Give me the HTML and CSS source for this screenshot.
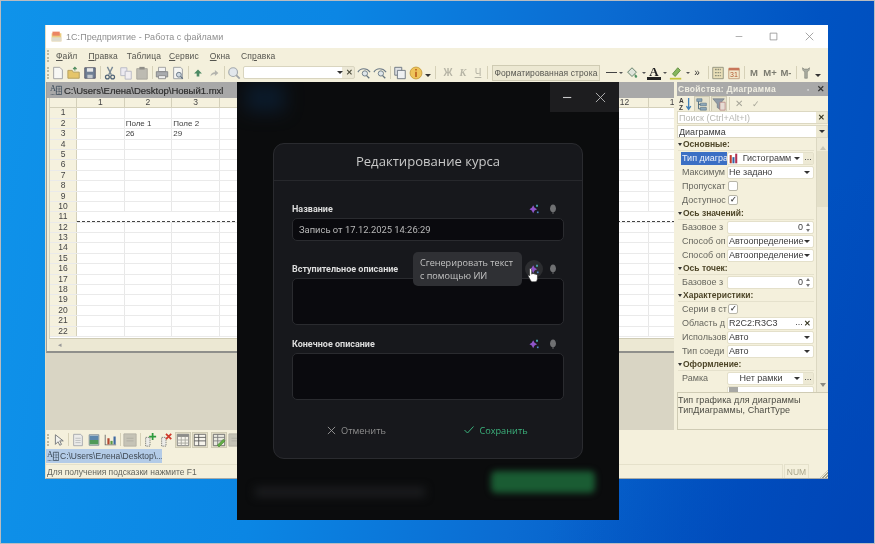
FILE: index.html
```html
<!DOCTYPE html>
<html lang="ru">
<head>
<meta charset="utf-8">
<title>1С:Предприятие</title>
<link rel="stylesheet" href="styles.css">
</head>
<body>
<svg class="defs" width="0" height="0" aria-hidden="true">
  <defs>
    <symbol id="i-new" viewBox="0 0 16 16"><path d="M3 1.500h7l3 3v10H3z" fill="#f7f7f4" stroke="#9a9c9e"/></symbol>
    <symbol id="i-open" viewBox="0 0 16 16"><path d="M1 5h5l1 2h7v7H1z" fill="#e5c56a" stroke="#b09a58"/><path d="M9 5V1.500M7 3.500l2-2 2 2" fill="none" stroke="#4d8a5c" stroke-width="1.3"/></symbol>
    <symbol id="i-save" viewBox="0 0 16 16"><path d="M2 2h12v12H2z" fill="#6f7f95" stroke="#556"/><path d="M4.500 2.500h7v4h-7z" fill="#e8e8e8"/><path d="M5 10h6v4H5z" fill="#c3c8ce"/></symbol>
    <symbol id="i-cut" viewBox="0 0 16 16"><path d="M5 1l4.500 9M11 1L6.500 10" stroke="#7a8a96" stroke-width="1.6" fill="none"/><circle cx="5" cy="12.500" r="2.200" fill="none" stroke="#4f6275" stroke-width="1.400"/><circle cx="11" cy="12.500" r="2.200" fill="none" stroke="#4f6275" stroke-width="1.400"/></symbol>
    <symbol id="i-copy" viewBox="0 0 16 16"><path d="M2 2h7v9H2z" fill="#eceaf0" stroke="#b3b6c2"/><path d="M7 6h7v9H7z" fill="#f1eef0" stroke="#b3b6c2"/></symbol>
    <symbol id="i-paste" viewBox="0 0 16 16"><path d="M2 3h12v12H2z" fill="#bdbbb2" stroke="#a5a39a"/><path d="M5 1h6v3H5z" fill="#8f8e88"/></symbol>
    <symbol id="i-print" viewBox="0 0 16 16"><path d="M4 1.500h8v5H4z" fill="#f2f2f2" stroke="#9a9a9a"/><path d="M1.500 6.500h13v6h-13z" fill="#a9abae" stroke="#808285"/><path d="M4 11h8v3.500H4z" fill="#ececec" stroke="#8a8a8a"/></symbol>
    <symbol id="i-preview" viewBox="0 0 16 16"><path d="M3 1.500h8l2 2v11H3z" fill="#f5f5f3" stroke="#94989c"/><circle cx="9" cy="10" r="2.800" fill="#cfd9e2" stroke="#61707f"/><path d="M11 12l2.500 2.500" stroke="#61707f" stroke-width="1.500"/></symbol>
    <symbol id="i-back" viewBox="0 0 16 16"><path d="M8 4L3.500 8.500H6.500V12h3V8.500h3z" fill="#4c8a63"/></symbol>
    <symbol id="i-fwd" viewBox="0 0 16 16"><path d="M4 12c0-3 2-5 5-5V4.500L13 8l-4 3.500V9c-2 0-4 1-5 3z" fill="#b3b3ad"/></symbol>
    <symbol id="i-find" viewBox="0 0 16 16"><circle cx="7" cy="7" r="5" fill="#e2e7ec" stroke="#a3a9ae" stroke-width="1.300"/><path d="M10.500 10.500l4 4" stroke="#9ea3a7" stroke-width="2"/></symbol>
    <symbol id="i-eye" viewBox="0 0 16 16"><path d="M1 7c3-5 10-5 14 0" fill="none" stroke="#6c7a86" stroke-width="1.200"/><circle cx="9" cy="8.500" r="3" fill="#dfe6ea" stroke="#66757f"/><path d="M11 11l3 3" stroke="#66757f" stroke-width="1.600"/></symbol>
    <symbol id="i-docs" viewBox="0 0 16 16"><path d="M2 1.500h8v9H2z" fill="#dfe2e6" stroke="#666f7a"/><path d="M5 5h9v9.500H5z" fill="#eef0f2" stroke="#666f7a"/></symbol>
    <symbol id="i-info" viewBox="0 0 16 16"><circle cx="8" cy="8" r="6.800" fill="#eec45a" stroke="#c79b3a"/><path d="M8 3.500v1.500M8 6.500v6" stroke="#b95a1b" stroke-width="1.800"/></symbol>
    <symbol id="i-fill" viewBox="0 0 16 16"><path d="M3 7l5-5 5 5-5 5z" fill="#dfe4da" stroke="#55745c"/><path d="M11 9c2 1 3 2 3 3a1.500 1.500 0 0 1-3 0z" fill="#4f9163"/></symbol>
    <symbol id="i-mark" viewBox="0 0 16 16"><path d="M4 9l6-7 3 3-6 7z" fill="#86b65e" stroke="#5d8a3a"/><path d="M1 13.500h13v2H1z" fill="#c5c43c"/></symbol>
    <symbol id="i-calc" viewBox="0 0 16 16"><path d="M2 1.500h12v13H2z" fill="#e9dfb8" stroke="#8d8f7a"/><path d="M4.500 4h7M4.500 7.500h7M4.500 11h7" stroke="#8d8f7a" stroke-width="1.500" stroke-dasharray="2 1"/></symbol>
    <symbol id="i-cal" viewBox="0 0 16 16"><path d="M2 3h12v11.500H2z" fill="#f1e7cb" stroke="#c09a78"/><path d="M2 2h12v3H2z" fill="#c8765a"/><text x="8" y="13" font-size="8" text-anchor="middle" fill="#b3562f" font-family="Liberation Sans">31</text></symbol>
    <symbol id="i-help" viewBox="0 0 16 16"><path d="M4 2c0 3 1 4 2.500 4.500V14h3V6.500C11 6 12 5 12 2l-2 1.500h-4z" fill="#a9aca0" stroke="#74766d" stroke-width=".6"/></symbol>
    <symbol id="i-az" viewBox="0 0 16 16"><text x="0" y="7" font-size="7.500" font-weight="700" fill="#3b3b3b" font-family="Liberation Sans">A</text><text x="0" y="15" font-size="7.500" font-weight="700" fill="#3b3b3b" font-family="Liberation Sans">Z</text><path d="M11 1v12M8.500 10.500L11 14l2.500-3.500" stroke="#3f7fb8" stroke-width="1.500" fill="none"/></symbol>
    <symbol id="i-tree" viewBox="0 0 16 16"><path d="M2 2h6v3H2zM6 7h7v3H6zM6 12h7v3H6z" fill="#8da7b8" stroke="#47657a" stroke-width=".6"/><path d="M4 5v8.500h2M4 8.500h2" stroke="#47657a" fill="none"/></symbol>
    <symbol id="i-filter" viewBox="0 0 16 16"><path d="M1 2h13L9 8v6l-3-2V8z" fill="#8f9aa6" stroke="#5f6a74" stroke-width=".6"/><path d="M9 6h6v9H9z" fill="#e6dcd4" stroke="#b07070" stroke-width=".7"/></symbol>
    <symbol id="i-arrow" viewBox="0 0 16 16"><path d="M5 2v11l3-3 2 4 2-1-2-4h4z" fill="#f2f2ee" stroke="#6c6f72"/></symbol>
    <symbol id="i-sheet" viewBox="0 0 16 16"><path d="M3 1.500h8l2 2v11H3z" fill="#ebebe9" stroke="#a2a5a9"/><path d="M5 6h6M5 8.500h6M5 11h6" stroke="#b9bbbd"/></symbol>
    <symbol id="i-pic" viewBox="0 0 16 16"><path d="M2.500 2h11v12h-11z" fill="#e4e8e6" stroke="#7b8a92"/><path d="M3 3h10v5H3z" fill="#5d87ad"/><path d="M3 8h10v5H3z" fill="#4f9a57"/></symbol>
    <symbol id="i-bars" viewBox="0 0 16 16"><path d="M2 14V2h1v11h12v1z" fill="#666"/><path d="M5 6h2.500v7H5z" fill="#b2462e"/><path d="M8.500 9H11v4H8.500z" fill="#5c9a45"/><path d="M12 4h2.500v9H12z" fill="#3f6aa1"/></symbol>
    <symbol id="i-gray" viewBox="0 0 16 16"><path d="M1 1h14v14H1z" fill="#c5c3b6" stroke="#b2b0a4"/><path d="M4 6h8M4 9h8" stroke="#aeaca1"/></symbol>
    <symbol id="i-rowadd" viewBox="0 0 16 16"><path d="M3 5h5v10H3z" fill="#ecece8" stroke="#72756f" stroke-dasharray="1.500 1"/><path d="M11 0v8M7 4h8" stroke="#2e9a3d" stroke-width="2"/></symbol>
    <symbol id="i-rowdel" viewBox="0 0 16 16"><path d="M3 5h5v10H3z" fill="#ecece8" stroke="#72756f" stroke-dasharray="1.500 1"/><path d="M8 1l6 6M14 1l-6 6" stroke="#cf3a2c" stroke-width="2"/></symbol>
    <symbol id="i-tbl" viewBox="0 0 16 16"><path d="M1.500 1.500h13v13h-13z" fill="#f6f4ec" stroke="#777"/><path d="M1.500 1.500h13v3h-13z" fill="#8d8d8a"/><path d="M6 4.500v10M10.500 4.500v10M1.500 8h13M1.500 11.500h13" stroke="#a5a59d"/></symbol>
    <symbol id="i-tbl2" viewBox="0 0 16 16"><path d="M1.500 1.500h13v13h-13z" fill="#f6f4ec" stroke="#666"/><path d="M1.500 5h13M1.500 9h13M6.500 1.500v13" stroke="#565656"/></symbol>
    <symbol id="i-edit" viewBox="0 0 16 16"><path d="M1.500 1.500h13v13h-13z" fill="#e9e9df" stroke="#666"/><path d="M1.500 5h13M6.500 1.500v13M1.500 9h13" stroke="#7d7d7d"/><path d="M6 14l7-7 2 2-7 7z" fill="#62ad45" stroke="#3d7d2a" stroke-width=".6"/></symbol>
    <symbol id="i-mxl" viewBox="0 0 16 16"><text x="0" y="9" font-size="11" fill="#3a4a58" font-family="Liberation Serif">A</text><path d="M8.500 3h7v11h-7z" fill="none" stroke="#3a4a58"/><path d="M8.500 6.500h7M8.500 10h7M12 3v11M1 14h6" stroke="#3a4a58" stroke-dasharray="1 .8"/></symbol>
    <symbol id="i-chart" viewBox="0 0 16 16"><path d="M1 3h3v12H1z" fill="#c0392b"/><path d="M5 6h3v9H5z" fill="#3465a4"/><path d="M9 1h3v14H9z" fill="#b03050"/></symbol>
    <symbol id="i-spark" viewBox="0 0 12 12"><path d="M5 1.500l1.700 3 3 1.700-3 1.700L5 11 3.300 7.900.5 6.200l2.800-1.700z" fill="#8f55c9"/><path d="M8.500 1h2.200v2.200H8.500z" fill="#46a6ac"/><path d="M9.500 9h2v2h-2z" fill="#4c86c4"/></symbol>
    <symbol id="i-mic" viewBox="0 0 12 12"><path d="M6 .5c2 0 3.300 1.700 3.500 4.500.2 3-1.300 5-3.500 5S2.300 8 2.500 5C2.700 2.200 4 .5 6 .5z" fill="#6f7072"/><path d="M6 9.500v2.500" stroke="#6f7072"/></symbol>
  </defs>
</svg>

<div class="desktop">
  <section class="win">
    <header class="win-title">
      <svg class="app-icon" viewBox="0 0 16 16"><path d="M2 4h12v10H2z" fill="#e8c46a"/><path d="M3 2h9v5H3z" fill="#e8704a"/><path d="M2 9h12v5H2z" fill="#d9d5c4"/></svg>
      <span class="win-name">1С:Предприятие - Работа с файлами</span>
      <span class="caps">
        <svg class="cap" viewBox="0 0 12 12"><path d="M1 6h10" stroke="#8a8a8a"/></svg>
        <svg class="cap" viewBox="0 0 12 12"><path d="M1.500 1.500h9v9h-9z" fill="none" stroke="#8a8a8a"/></svg>
        <svg class="cap" viewBox="0 0 12 12"><path d="M1 1l10 10M11 1L1 11" stroke="#8a8a8a"/></svg>
      </span>
    </header>
    <nav class="menu">
      <i class="grip"></i>
      <span class="mi"><u>Ф</u>айл</span>
      <span class="mi"><u>П</u>равка</span>
      <span class="mi">Таблица</span>
      <span class="mi"><u>С</u>ервис</span>
      <span class="mi"><u>О</u>кна</span>
      <span class="mi">Сп<u>р</u>авка</span>
    </nav>
    <div class="toolbar">
      <i class="grip"></i>
      <svg class="ti"><use href="#i-new"/></svg>
      <svg class="ti"><use href="#i-open"/></svg>
      <svg class="ti"><use href="#i-save"/></svg>
      <i class="sep"></i>
      <svg class="ti"><use href="#i-cut"/></svg>
      <svg class="ti"><use href="#i-copy"/></svg>
      <svg class="ti"><use href="#i-paste"/></svg>
      <i class="sep"></i>
      <svg class="ti"><use href="#i-print"/></svg>
      <svg class="ti"><use href="#i-preview"/></svg>
      <i class="sep"></i>
      <svg class="ti"><use href="#i-back"/></svg>
      <svg class="ti"><use href="#i-fwd"/></svg>
      <i class="sep"></i>
      <svg class="ti"><use href="#i-find"/></svg>
      <span class="searchbox"><i class="drop"></i><b class="xmark">✕</b></span>
      <svg class="ti"><use href="#i-eye"/></svg>
      <svg class="ti"><use href="#i-eye"/></svg>
      <i class="sep"></i>
      <svg class="ti"><use href="#i-docs"/></svg>
      <svg class="ti"><use href="#i-info"/></svg>
      <i class="drop drop-after"></i>
      <i class="sep sep-wide"></i>
      <span class="fmt bold-dim">Ж</span>
      <span class="fmt ital-dim">К</span>
      <span class="fmt under-dim">Ч</span>
      <i class="sep"></i>
      <span class="fmtbox">Форматированная строка</span>
      <span class="dash"></span><i class="drop drop-tiny"></i>
      <svg class="ti"><use href="#i-fill"/></svg><i class="drop drop-tiny"></i>
      <span class="letter-a">A</span><i class="drop drop-tiny"></i>
      <svg class="ti"><use href="#i-mark"/></svg><i class="drop drop-tiny"></i>
      <span class="more">»</span>
      <i class="sep"></i>
      <svg class="ti"><use href="#i-calc"/></svg>
      <svg class="ti"><use href="#i-cal"/></svg>
      <i class="sep"></i>
      <span class="mem">М</span><span class="mem">М+</span><span class="mem">М-</span>
      <i class="sep"></i>
      <svg class="ti"><use href="#i-help"/></svg>
      <i class="drop drop-after"></i>
    </div>

    <div class="main">
      <div class="mdi">
        <div class="doc">
          <div class="doc-title">
            <svg class="doc-icon"><use href="#i-mxl"/></svg>
            <span>C:\Users\Елена\Desktop\Новый1.mxl</span>
          </div>
          <div class="sheet">
            <div class="row row-head"><span class="rh"></span><span class="ch">1</span><span class="ch">2</span><span class="ch">3</span><span class="ch">4</span><span class="ch">5</span><span class="ch">6</span><span class="ch">7</span><span class="ch">8</span><span class="ch">9</span><span class="ch">10</span><span class="ch">11</span><span class="ch">12</span><span class="ch">1</span></div>
            <div class="row"><span class="rh">1</span></div>
            <div class="row"><span class="rh">2</span><span class="c"></span><span class="c">Поле 1</span><span class="c">Поле 2</span></div>
            <div class="row"><span class="rh">3</span><span class="c"></span><span class="c">26</span><span class="c">29</span></div>
            <div class="row"><span class="rh">4</span></div>
            <div class="row"><span class="rh">5</span></div>
            <div class="row"><span class="rh">6</span></div>
            <div class="row"><span class="rh">7</span></div>
            <div class="row"><span class="rh">8</span></div>
            <div class="row"><span class="rh">9</span></div>
            <div class="row"><span class="rh">10</span></div>
            <div class="row row-break"><span class="rh">11</span></div>
            <div class="row"><span class="rh">12</span></div>
            <div class="row"><span class="rh">13</span></div>
            <div class="row"><span class="rh">14</span></div>
            <div class="row"><span class="rh">15</span></div>
            <div class="row"><span class="rh">16</span></div>
            <div class="row"><span class="rh">17</span></div>
            <div class="row"><span class="rh">18</span></div>
            <div class="row"><span class="rh">19</span></div>
            <div class="row"><span class="rh">20</span></div>
            <div class="row"><span class="rh">21</span></div>
            <div class="row"><span class="rh">22</span></div>
          </div>
          <div class="hscroll"><span class="hscroll-btn">◂</span></div>
        </div>
      </div>

      <aside class="props">
        <div class="props-title"><span>Свойства: Диаграмма</span><span class="pin">▫</span><b class="close">✕</b></div>
        <div class="props-tools">
          <svg class="ti ti-first"><use href="#i-az"/></svg>
          <span class="pressed"><svg class="ti"><use href="#i-tree"/></svg></span>
          <span class="pressed"><svg class="ti"><use href="#i-filter"/></svg></span>
          <i class="sep"></i>
          <span class="tool-x">✕</span>
          <span class="tool-ok">✓</span>
        </div>
        <div class="combo"><span class="combo-text combo-ph">Поиск (Ctrl+Alt+I)</span><b class="combo-x combo-btn">✕</b></div>
        <div class="combo"><span class="combo-text">Диаграмма</span><span class="combo-btn"><i class="drop"></i></span></div>
        <div class="plist">
          <div class="rows">
            <div class="grp">Основные:</div>
            <div class="p"><span class="pl pl-sel">Тип диагра</span><span class="pv"><svg class="chart"><use href="#i-chart"/></svg><span class="pv-c">Гистограмм</span><i class="drop"></i><span class="dots">...</span></span></div>
            <div class="p"><span class="pl">Максимум</span><span class="pv"><span class="pv-t">Не задано</span><i class="drop"></i></span></div>
            <div class="p"><span class="pl">Пропускат</span><span class="pv pv-bare"><i class="cb"></i></span></div>
            <div class="p"><span class="pl">Доступнос</span><span class="pv pv-bare"><i class="cb cb-on">✓</i></span></div>
            <div class="grp">Ось значений:</div>
            <div class="p"><span class="pl">Базовое з</span><span class="pv"><span class="pv-n">0</span><i class="spin"></i></span></div>
            <div class="p"><span class="pl">Способ оп</span><span class="pv"><span class="pv-t">Автоопределение</span><i class="drop"></i></span></div>
            <div class="p"><span class="pl">Способ оп</span><span class="pv"><span class="pv-t">Автоопределение</span><i class="drop"></i></span></div>
            <div class="grp">Ось точек:</div>
            <div class="p"><span class="pl">Базовое з</span><span class="pv"><span class="pv-n">0</span><i class="spin"></i></span></div>
            <div class="grp">Характеристики:</div>
            <div class="p"><span class="pl">Серии в ст</span><span class="pv pv-bare"><i class="cb cb-on">✓</i></span></div>
            <div class="p"><span class="pl">Область д</span><span class="pv"><span class="pv-t">R2C2:R3C3</span><span class="dots">...</span><b class="combo-x">✕</b></span></div>
            <div class="p"><span class="pl">Использов</span><span class="pv"><span class="pv-t">Авто</span><i class="drop"></i></span></div>
            <div class="p"><span class="pl">Тип соеди</span><span class="pv"><span class="pv-t">Авто</span><i class="drop"></i></span></div>
            <div class="grp">Оформление:</div>
            <div class="p"><span class="pl">Рамка</span><span class="pv"><span class="pv-c">Нет рамки</span><i class="drop"></i><span class="dots">...</span></span></div>
            <div class="p"><span class="pl pl-low"></span><span class="pv"><i class="swatch"></i></span></div>
          </div>
          <div class="vscroll"><i class="up"></i><i class="thumb"></i><i class="down"></i></div>
        </div>
        <div class="hint">Тип графика для диаграммы<br>ТипДиаграммы, ChartType</div>
      </aside>
    </div>

    <div class="bottombar">
      <i class="grip"></i>
      <svg class="ti"><use href="#i-arrow"/></svg>
      <i class="sep"></i>
      <svg class="ti"><use href="#i-sheet"/></svg>
      <svg class="ti"><use href="#i-pic"/></svg>
      <svg class="ti"><use href="#i-bars"/></svg>
      <i class="sep"></i>
      <svg class="ti"><use href="#i-gray"/></svg>
      <i class="sep"></i>
      <svg class="ti"><use href="#i-rowadd"/></svg>
      <svg class="ti"><use href="#i-rowdel"/></svg>
      <span class="pressed"><svg class="ti"><use href="#i-tbl"/></svg></span>
      <span class="pressed"><svg class="ti"><use href="#i-tbl2"/></svg></span>
      <span class="pressed pressed-gap"><svg class="ti"><use href="#i-edit"/></svg></span>
      <svg class="ti"><use href="#i-gray"/></svg>
    </div>
    <div class="tasks"><span class="task"><svg class="doc-icon"><use href="#i-mxl"/></svg>C:\Users\Елена\Desktop\...</span></div>
    <footer class="status"><span class="status-text">Для получения подсказки нажмите F1</span><span class="num">NUM</span><i class="resize"></i></footer>
  </section>

  <section class="dlg">
    <i class="glow"></i>
    <i class="blur-btn"></i>
    <i class="blur-text"></i>
    <div class="dlg-head">
      <span class="dlg-caps">
        <svg class="dlg-cap" viewBox="0 0 12 12"><path d="M0 6h9" stroke="#c8c8c8" stroke-width="1.200"/></svg>
        <svg class="dlg-cap" viewBox="0 0 12 12"><path d="M1 1l10 10M11 1L1 11" stroke="#b8b8b8"/></svg>
      </span>
    </div>
    <div class="card">
      <h1 class="card-title">Редактирование курса</h1>
      <div class="form">
        <div class="group group-first">
          <div class="lab"><span>Название</span><span class="acts"><span class="act"><svg class="ai"><use href="#i-spark"/></svg></span><span class="act"><svg class="ai"><use href="#i-mic"/></svg></span></span></div>
          <div class="field">Запись от 17.12.2025 14:26:29</div>
        </div>
        <div class="group">
          <div class="lab"><span>Вступительное описание</span><span class="acts"><span class="act act-hover"><svg class="ai"><use href="#i-spark"/></svg></span><span class="act"><svg class="ai"><use href="#i-mic"/></svg></span></span></div>
          <div class="field field-tall"></div>
          <div class="tip">Сгенерировать текст<br>с помощью ИИ</div>
          <svg class="hand" viewBox="0 0 14 18"><path d="M4 1.500c1 0 1.500.6 1.500 1.500v5l.6-.2c.2-.7 2-.7 2.200.2.400-.6 1.900-.4 2 .5.500-.4 1.900-.2 1.900 1v3.500c0 2-1.200 4-2.700 4H6.500c-1 0-1.700-.8-2.500-2L1.500 10.500c-.5-1 .8-2 1.600-1L3 10V3c0-.9.300-1.500 1-1.500z" fill="#fff" stroke="#222" stroke-width=".7"/></svg>
        </div>
        <div class="group">
          <div class="lab"><span>Конечное описание</span><span class="acts"><span class="act"><svg class="ai"><use href="#i-spark"/></svg></span><span class="act"><svg class="ai"><use href="#i-mic"/></svg></span></span></div>
          <div class="field field-tall"></div>
        </div>
      </div>
      <div class="btns">
        <span class="btn btn-cancel"><svg class="bi" viewBox="0 0 10 10"><path d="M1 1l8 8M9 1L1 9" stroke="#9a9a9a"/></svg>Отменить</span>
        <span class="btn btn-save"><svg class="bi bi-ok" viewBox="0 0 10 8"><path d="M.5 4l3 3L9.500.5" fill="none" stroke="#3bb27c"/></svg>Сохранить</span>
      </div>
    </div>
  </section>
</div>
</body>
</html>
```

FILE: styles.css
```css
* { box-sizing: border-box; }
html, body { margin: 0; padding: 0; }
body { width: 875px; height: 544px; overflow: hidden; background: #0a6fd8; font-family: "Liberation Sans", Arial, sans-serif; }
.defs { position: absolute; }
i { display: block; font-style: normal; }

.desktop {
  position: relative; width: 875px; height: 544px; overflow: hidden;
  border: 1px solid #b9bcc0;
  background:
    radial-gradient(ellipse 420px 460px at 960px 620px, #0043b5 0%, rgba(0,67,181,0) 100%),
    linear-gradient(100deg, #0f93ea 0%, #0b86e4 35%, #0b6cd2 62%, #0053c2 85%, #004cbd 100%);
  filter: blur(.45px);
}

/* 1C window */
.win {
  position: absolute; left: 44px; top: 24px; width: 783px; height: 454px;
  display: flex; flex-direction: column; background: #f4f0dc;
  border-left: 1px solid #e3ddc4; border-bottom: 1px solid #a9aba6;
  font-size: 8.5px; color: #4a4a48;
}
.win-title { height: 23px; flex: none; background: #fff; display: flex; align-items: center; padding-left: 4px; }
.app-icon { width: 13px; height: 13px; margin-right: 3px; opacity: .85; }
.win-name { font-size: 9px; color: #8f8f8f; flex: 1; letter-spacing: .05px; }
.caps { display: flex; }
.cap { width: 9px; height: 9px; }
.caps .cap:first-child { width: 8px; }
.caps .cap:nth-child(2) { margin-left: 26px; }
.caps .cap:nth-child(3) { margin-left: 27px; margin-right: 14px; }

.grip { width: 2px; height: 12px; margin: 0 1px 0 1px; border-left: 2px dotted #bdb8a0; flex: none; }
.menu { height: 15px; flex: none; display: flex; align-items: center; font-size: 8.5px; letter-spacing: .12px; }
.mi { color: #55554f; }
.mi + .mi { margin-left: 11px; }
.mi u { text-decoration-thickness: 1px; text-underline-offset: 1px; }
.menu .mi:first-of-type { margin-left: 6px; }
.menu .mi:nth-of-type(3) { margin-left: 9px; }
.menu .mi:nth-of-type(4) { margin-left: 8px; }
.menu .mi:nth-of-type(5) { margin-left: 11px; }

.toolbar, .bottombar { flex: none; display: flex; align-items: center; }
.toolbar { height: 19px; }
.ti { width: 14px; height: 14px; flex: none; margin: 0 1px; }
.sep { width: 1px; height: 13px; background: #d6d1b8; margin: 0 1.5px; flex: none; }
.sep-wide { margin: 0 4.5px 0 4px; }
.drop { width: 0; height: 0; border: 3px solid transparent; border-top: 3px solid #333; border-bottom: 0; flex: none; }
.drop-after { margin-left: 1px; margin-top: 6px; }
.drop-tiny { border-width: 2px; border-bottom: 0; border-top: 2px solid #555; margin: 0 1px 0 2px; }
.searchbox { width: 112px; height: 13px; margin: 0 1px 0 1px; flex: none; background: linear-gradient(90deg, #fff 0, #fff 89%, #ece8d5 89%); border: 1px solid #d9d5bf; border-radius: 2px; display: flex; align-items: center; justify-content: flex-end; gap: 3px; padding-right: 1px; }
.xmark { font-size: 8px; color: #4d4d3c; }
.fmt { width: 15px; text-align: center; font-size: 10px; color: #b7b5a6; font-weight: 700; flex: none; }
.ital-dim { font-style: italic; font-family: "Liberation Serif", serif; }
.under-dim { text-decoration: underline; font-weight: 400; }
.fmtbox { width: 108px; height: 16px; margin: 0 6px 0 2.5px; flex: none; background: #ece8d2; border: 1px solid #cfcbb3; font-size: 8.5px; letter-spacing: .1px; line-height: 14px; text-align: center; white-space: nowrap; color: #55554f; }
.dash { width: 11px; height: 1px; background: #444; flex: none; }
.letter-a { width: 14px; font-size: 13px; font-weight: 700; font-family: "Liberation Serif", serif; color: #222; text-align: center; border-bottom: 3px solid #222; line-height: 11px; flex: none; }
.more { width: 14px; font-size: 10px; text-align: center; color: #333; flex: none; margin: 0 2px 0 -1px; }
.mem { width: 16px; text-align: center; font-size: 9.5px; font-weight: 700; color: #7b7b70; flex: none; }

.main { height: 348px; flex: none; display: flex; }
.mdi { width: 628px; flex: none; background: #d9d5c4; }
.doc { height: 271px; display: flex; flex-direction: column; background: #f1edd8; border-left: 1px solid #9f9f9b; border-bottom: 2px solid #8f8f8b; }
.doc-title { height: 16px; flex: none; background: #a8a8a8; display: flex; align-items: center; gap: 2px; padding-left: 3px; font-size: 9.5px; color: #2e2e2e; -webkit-text-stroke: .2px #2e2e2e; }
.doc-icon { width: 12px; height: 12px; flex: none; }
.sheet { flex: 1; overflow: hidden; margin-left: 2px; background: #fff; border-left: 1px solid #d4d0ba; }
.row {
  height: 10.4px; display: flex; border-bottom: 1px solid #eaeaea; font-size: 8px; line-height: 9.4px; overflow: hidden;
  background: repeating-linear-gradient(90deg, transparent 0, transparent 46.67px, #e8e8e8 46.67px, #e8e8e8 47.67px) 27px 0 no-repeat;
}
.row-head { background: #f5f1de; border-bottom: 1px solid #d4d0ba; }
.rh { width: 27px; flex: none; text-align: center; background: #f5f1de; border-right: 1px solid #d4d0ba; color: #444; font-size: 8.5px; }
.ch { width: 47.67px; flex: none; text-align: center; border-right: 1px solid #d4d0ba; color: #444; font-size: 8.5px; }
.c { width: 47.67px; flex: none; padding-left: 1px; color: #3c3c3c; white-space: nowrap; }
.row-break { background: repeating-linear-gradient(90deg, #444 0 3px, transparent 3px 5px) 27px 100% / 100% 1px no-repeat; }
.hscroll { height: 13px; flex: none; margin-left: 2px; background: #ece8d3; border-top: 1px solid #cfcbb4; font-size: 7px; color: #999; line-height: 12px; }
.hscroll-btn { display: block; width: 11px; text-align: center; margin-left: 5px; }

/* Properties */
.props { flex: 1; min-width: 0; display: flex; flex-direction: column; margin-left: 3px; }
.props-title { height: 14px; flex: none; background: #a9a9a9; color: #f0eee2; font-weight: 700; font-size: 8.5px; letter-spacing: .3px; display: flex; align-items: center; padding-left: 1px; }
.props-title span:first-child { flex: 1; }
.pin { color: #eee; margin-right: 7px; font-size: 7px; }
.close { font-size: 9px; color: #333; margin-right: 3px; }
.props-tools { height: 15px; flex: none; display: flex; align-items: center; }
.ti-first { margin: 0 0 0 2px; }
.pressed { display: flex; flex: none; background: #e6e2cc; border: 1px solid #cfcbb4; margin-left: 1px; }
.pressed .ti { margin: 0; }
.tool-x { font-size: 10px; color: #a6a598; margin: 0 0 0 4px; }
.tool-ok { font-size: 9px; color: #a6a598; margin-left: 9px; }
.combo { height: 13px; flex: none; margin: 0 0 1px; display: flex; align-items: center; background: #fff; border: 1px solid #dcd8c2; }
.combo + .combo { margin-bottom: 0; }
.combo-text { flex: 1; padding-left: 1px; white-space: nowrap; color: #3b3b3b; font-size: 9px; }
.combo-ph { color: #b7b7b2; }
.combo-x { font-size: 8px; color: #33331f; margin-right: 2px; }
.combo-btn { width: 11px; height: 11px; margin: 0; display: flex; align-items: center; justify-content: center; background: #ece8d2; flex: none; }
.plist { height: 254px; flex: none; display: flex; overflow: hidden; }
.rows { width: 139px; flex: none; padding: 0 2px 0 1px; }
.grp { height: 13px; font-weight: 700; font-size: 8.5px; line-height: 12px; color: #4e4628; padding-left: 5px; border-bottom: 1px solid #e5e1cc; position: relative; white-space: nowrap; }
.grp::before { content: ""; position: absolute; left: 0; top: 5px; border: 2px solid transparent; border-top: 3px solid #333; border-bottom: 0; }
.p { height: 14px; display: flex; align-items: center; }
.pl { width: 46px; margin-left: 3px; flex: none; padding-left: 1px; overflow: hidden; white-space: nowrap; font-size: 9px; color: #66665e; }
.pl-sel { background: #3b6fc4; color: #eef2fa; height: 13px; line-height: 13px; }
.pl-low { height: 13px; }
.pv { flex: 1; height: 13px; min-width: 0; display: flex; align-items: center; background: #fff; border: 1px solid #e4e0ca; border-radius: 2px; font-size: 9px; color: #3c3c3c; background-clip: padding-box; }
.pv .drop { margin: 0 3px 0 auto; }
.pv-bare { background: none; border: 0; }
.pv-t { flex: 1; padding-left: 1px; white-space: nowrap; overflow: hidden; }
.pv-c { flex: 1; text-align: center; white-space: nowrap; overflow: hidden; }
.pv-n { flex: 1; text-align: right; padding-right: 2px; }
.pv .drop + .dots { background: #ede9d4; }
.chart { width: 11px; height: 11px; flex: none; margin-left: 1px; }
.dots { width: 10px; flex: none; text-align: center; color: #444; line-height: 9px; height: 11px; }
.swatch { width: 9px; height: 6px; margin: 0 0 4px 1px; background: #a8a8a4; }
.spin { width: 7px; height: 9px; margin-right: 1px; position: relative; }
.spin::before, .spin::after { content: ""; position: absolute; left: 1px; border: 2px solid transparent; }
.spin::before { top: 0; border-bottom: 3px solid #777; border-top: 0; }
.spin::after { bottom: 0; border-top: 3px solid #777; border-bottom: 0; }
.cb { width: 10px; height: 10px; margin-left: 1px; background: #fff; border: 1px solid #b8b6a8; border-radius: 2px; font-size: 8px; line-height: 8px; text-align: center; color: #444; font-weight: 700; }
.vscroll { flex: 1; background: #eeead6; display: flex; flex-direction: column; align-items: center; border-left: 1px solid #dcd8c2; padding-top: 8px; }
.thumb { width: 11px; height: 56px; margin-top: 1px; background: #e3dfc8; }
.up, .down { width: 0; height: 0; border: 3px solid transparent; }
.up { border-bottom: 4px solid #c8c6b6; border-top: 0; }
.down { border-top: 4px solid #8a8a80; border-bottom: 0; margin-top: auto; margin-bottom: 5px; }
.hint { height: 38px; flex: none; background: #f4f0dc; border: 1px solid #cfcbb4; border-right: 0; padding: 2px 0; font-size: 9px; line-height: 10px; letter-spacing: .1px; color: #4c4c44; white-space: nowrap; overflow: hidden; }

.bottombar { height: 19px; }
.tasks { height: 14px; flex: none; }
.task { display: inline-flex; align-items: center; width: 116px; height: 14px; background: #b3cbe7; color: #3f4852; font-size: 8.5px; white-space: nowrap; gap: 1px; padding-left: 1px; overflow: hidden; }
.status { height: 15px; flex: none; display: flex; align-items: center; font-size: 8.5px; color: #66665e; }
.status-text { flex: 1; padding-left: 1px; height: 14px; line-height: 14px; border: 1px solid #e5e1cb; border-width: 1px 1px 0 0; }
.num { width: 25px; margin: 0 19px 0 1px; height: 14px; line-height: 14px; text-align: center; color: #aaa68c; border: 1px solid #e5e1cb; border-width: 1px 1px 0; }
.resize { position: absolute; right: 0; bottom: 0; width: 8px; height: 8px; background: repeating-linear-gradient(135deg, transparent 0 1px, #a8a690 1px 2px); clip-path: polygon(100% 0, 100% 100%, 0 100%); }
.pressed-gap { margin-left: 3px; }

/* Dark dialog */
.dlg { position: absolute; left: 236px; top: 81px; width: 382px; height: 438px; background: #0b0c0d; overflow: hidden; font-family: "Open Sans", "Noto Sans", sans-serif; }
.glow { position: absolute; left: 8px; top: 2px; width: 40px; height: 28px; background: #0c2a4a; filter: blur(9px); opacity: .5; }
.blur-btn { position: absolute; left: 254px; top: 389px; width: 104px; height: 22px; border-radius: 5px; background: #1a5c33; filter: blur(3px); }
.blur-text { position: absolute; left: 18px; top: 405px; width: 170px; height: 10px; background: #1b1c1e; filter: blur(4px); }
.dlg-head { height: 61px; display: flex; justify-content: flex-end; align-items: flex-start; }
.dlg-caps { position: relative; width: 69px; height: 30px; background: #1d1d1f; display: flex; align-items: center; justify-content: space-between; padding: 0 13px; }
.dlg-cap { width: 11px; height: 11px; }
.card { position: relative; margin-left: 36px; width: 310px; height: 316px; background: #17181c; border: 1px solid #2a2b2f; border-radius: 11px; }
.card-title { margin: 0; height: 37px; border-bottom: 1px solid #27282c; font-size: 13.1px; font-weight: 400; line-height: 35px; text-align: center; color: #c9c9c9; }
.form { padding: 0 18px; }
.group { position: relative; margin-top: 11px; }
.group-first { margin: 20px 0 20px; }
.lab { height: 16px; margin-bottom: 1px; display: flex; align-items: center; justify-content: space-between; font-family: Roboto, sans-serif; font-size: 9px; font-weight: 700; color: #dcdcdc; }
.acts { display: flex; gap: 1px; margin-right: 2px; }
.act { width: 18px; height: 18px; border-radius: 50%; display: flex; align-items: center; justify-content: center; }
.act-hover { background: #2c2d30; }
.ai { width: 10px; height: 10px; }
.field { height: 23px; border: 1px solid #2a2b2f; border-radius: 5px; background: #0a0a0e; padding-left: 6px; font-family: Roboto, sans-serif; font-size: 9.4px; line-height: 21px; color: #b9b9b9; }
.field-tall { height: 47px; }
.tip { position: absolute; left: 121px; top: -9px; width: 109px; height: 34px; padding: 4px 7px; background: #2f3034; border-radius: 5px; font-size: 9.1px; line-height: 13px; color: #c4c4c4; white-space: nowrap; }
.hand { position: absolute; left: 235px; top: 6px; width: 12px; height: 16px; }
.btns { display: grid; grid-template-columns: 1fr 1fr; padding: 20px 18px 0; }
.btn { display: flex; align-items: center; justify-content: center; gap: 5px; font-size: 9.2px; height: 20px; }
.btn-cancel { color: #8e8e8e; margin-right: 7px; }
.btn-save { color: #3bb27c; }
.bi { width: 9px; height: 9px; }
.bi-ok { width: 10px; height: 8px; }
```
